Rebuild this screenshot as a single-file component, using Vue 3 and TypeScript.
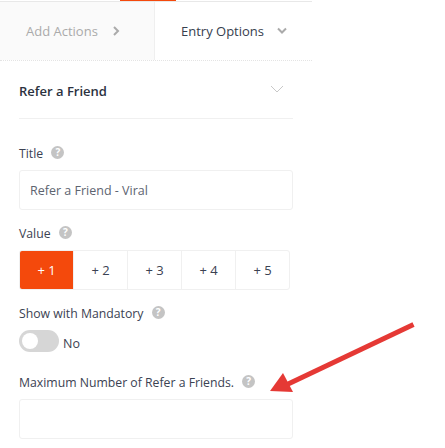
<template>
  <div class="page">
    <div class="panel">
      <div class="top-rule"><span class="top-accent"></span></div>
      <div class="tabs">
        <div class="tab tab-off">
          <span>Add Actions</span>
          <svg class="tab-icon" width="9" height="10" viewBox="0 0 9 10"><path d="M2 1l4 4-4 4" fill="none" stroke="#aaa" stroke-width="2" /></svg>
        </div>
        <div class="tab tab-on">
          <span>Entry Options</span>
          <svg class="tab-icon" width="10" height="8" viewBox="0 0 10 8"><path d="M1 1.5l4 4 4-4" fill="none" stroke="#aaa" stroke-width="2" /></svg>
        </div>
      </div>
      <div class="section-head">
        <span class="section-title">Refer a Friend</span>
        <svg class="section-chev" width="14" height="8" viewBox="0 0 14 8"><path d="M1 1l6 6 6-6" fill="none" stroke="#c8c8c8" stroke-width="1" /></svg>
      </div>
      <form class="fields" @submit.prevent>
        <div class="field">
          <div class="label">Title <span class="help">?</span></div>
          <div class="input input-text">Refer a Friend - Viral</div>
        </div>
        <div class="field">
          <div class="label">Value <span class="help">?</span></div>
          <div class="segments">
            <div v-for="(v, i) in values" :key="v" class="segment" :class="{ active: i === 0 }">+ {{ v }}</div>
          </div>
        </div>
        <div class="field">
          <div class="label">Show with Mandatory <span class="help">?</span></div>
          <div class="toggle-row">
            <span class="toggle"><span class="knob"></span></span>
            <span class="toggle-text">No</span>
          </div>
        </div>
        <div class="field field-last">
          <div class="label">Maximum Number of Refer a Friends. <span class="help">?</span></div>
          <div class="input"></div>
        </div>
      </form>
    </div>
    <svg class="arrow" width="445" height="448" viewBox="0 0 445 448">
      <path d="M413.5 324.5L286 385" fill="none" stroke="#e53935" stroke-width="5" />
      <path d="M283 373L270 391L293 392Z" fill="#e53935" />
    </svg>
  </div>
</template>

<script setup lang="ts">
const values: number[] = [1, 2, 3, 4, 5];
</script>

<style>
html, body { background: #fff; }
</style>

<style scoped>
.page {
  position: relative;
  width: 445px;
  height: 448px;
  overflow: hidden;
  font-family: "Open Sans", sans-serif;
  font-size: 12.25px;
  color: #3b4252;
  background: #fff;
}
.panel { width: 312px; }
.top-rule {
  height: 2px;
  border-bottom: 1px solid #e8e8e8;
  box-sizing: border-box;
  padding-left: 120px;
}
.top-accent { display: block; width: 56px; height: 1px; background: #f4490c; }
.tabs {
  display: flex;
  height: 59px;
  border-bottom: 1px dotted #e4e4e4;
  box-sizing: border-box;
  font-size: 13px;
}
.tab { display: flex; align-items: center; }
.tab-off {
  width: 155px;
  padding-left: 26px;
  box-sizing: border-box;
  color: #aaa;
  background: #fafafa;
  border-right: 1px solid #efefef;
}
.tab-off .tab-icon { margin-left: 14px; }
.tab-on { padding-left: 26px; color: #36404e; }
.tab-on .tab-icon { margin-left: 13px; }
.section-head {
  display: flex;
  align-items: center;
  justify-content: space-between;
  height: 58px;
  margin: 0 19px;
  padding: 2px 9px 0 0;
  border-bottom: 1px solid #f0f0f0;
  box-sizing: border-box;
}
.section-title { font-size: 13px; font-weight: 600; color: #2b3240; }
.section-chev { margin-top: -4px; }
.fields { display: flex; flex-direction: column; gap: 14px; padding: 25px 19px 0; }
.field-last { margin-top: 7px; }
.label { height: 20px; line-height: 20px; margin-bottom: 6px; }
.help {
  display: inline-block;
  width: 13px;
  height: 13px;
  margin-left: 5px;
  border-radius: 50%;
  background: #c4c4c4;
  color: #fff;
  font-size: 10px;
  font-weight: 700;
  line-height: 13px;
  text-align: center;
  vertical-align: 2px;
}
.input {
  height: 40px;
  box-sizing: border-box;
  width: 274px;
  border: 1px solid #f0f0f0;
  border-radius: 3px;
  background: #fff;
}
.input-text { line-height: 40px; padding-left: 10px; color: #5d6470; font-size: 12.5px; }
.segments {
  display: flex;
  width: 271px;
  height: 40px;
  box-sizing: border-box;
  border: 1px solid #f0f0f0;
  border-radius: 3px;
  overflow: hidden;
}
.segment {
  flex: 1;
  display: flex;
  align-items: center;
  justify-content: center;
  border-left: 1px solid #f0f0f0;
  font-size: 13px;
  color: #3b4252;
}
.segment:first-child { border-left: 0; }
.segment.active { flex: 0 0 53px; background: #f4490c; color: #fff; }
.toggle-row { display: flex; align-items: center; gap: 4px; height: 22px; }
.toggle {
  display: block;
  width: 40px;
  height: 22px;
  padding: 3px;
  box-sizing: border-box;
  border-radius: 11px;
  background: #d6d6d6;
}
.knob { display: block; width: 16px; height: 16px; border-radius: 50%; background: #fff; }
.toggle-text { font-size: 12.5px; padding-top: 4px; }
.arrow { position: absolute; left: 0; top: 0; pointer-events: none; }
</style>
